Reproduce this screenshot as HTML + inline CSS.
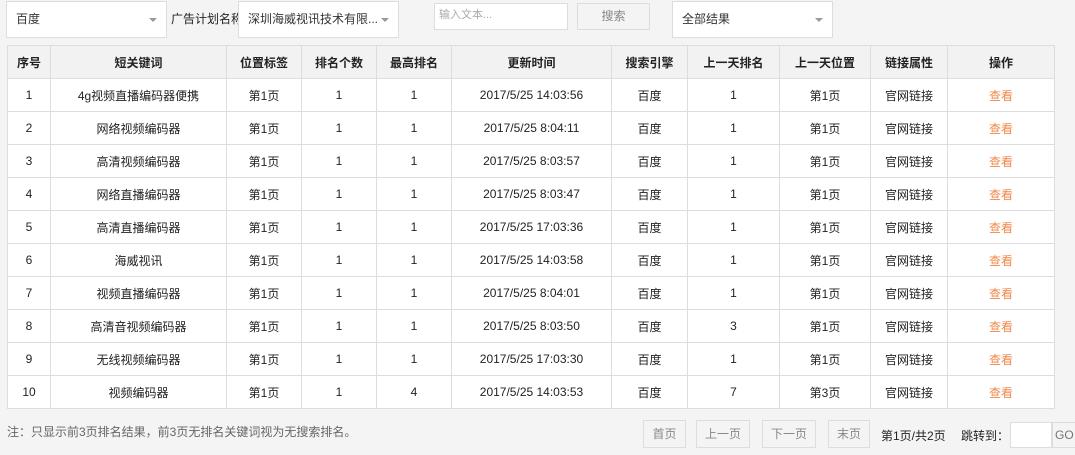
<!DOCTYPE html>
<html><head><meta charset="utf-8"><style>
*{box-sizing:border-box;margin:0;padding:0}
body{width:1075px;height:455px;background:#f4f4f4;font-family:"Liberation Sans","Noto Sans CJK SC",sans-serif;font-size:12px;color:#222;position:relative;overflow:hidden}
.a{position:absolute}
.sel{background:#fff;border:1px solid #ddd;height:37px;top:1px;line-height:35px;padding-left:9px;color:#333}
.sel:after{content:"";position:absolute;right:9px;top:16px;border-left:4px solid transparent;border-right:4px solid transparent;border-top:4px solid #999}
table{position:absolute;left:7px;top:45px;width:1048px;border-collapse:collapse;background:#fff}
td,th{border:1px solid #ddd;text-align:center;height:33px;font-size:12px}
th{background:#f2f2f2;font-weight:bold;color:#222}
td.v{color:#f0884a}
.btn{border:1px solid #ddd;background:#f4f4f4;color:#888;text-align:center;height:28px;line-height:26px;top:420px}
</style></head><body>
<div class="a sel" style="left:6px;width:161px">百度</div>
<div class="a" style="left:171px;top:10px;width:67px;overflow:hidden;white-space:nowrap">广告计划名称</div>
<div class="a sel" style="left:238px;width:161px">深圳海威视讯技术有限...</div>
<div class="a" style="left:434px;top:3px;width:134px;height:27px;border:1px solid #ddd;background:#fff;color:#aaa;line-height:23px;padding-left:4px;font-size:11px">输入文本...</div>
<div class="a" style="left:577px;top:3px;width:73px;height:27px;border:1px solid #ddd;color:#888;text-align:center;line-height:25px">搜索</div>
<div class="a sel" style="left:672px;width:161px">全部结果</div>
<table>
<colgroup><col style="width:43px"><col style="width:176px"><col style="width:75px"><col style="width:75px"><col style="width:75px"><col style="width:160px"><col style="width:76px"><col style="width:92px"><col style="width:91px"><col style="width:77px"><col></colgroup>
<tr><th>序号</th><th>短关键词</th><th>位置标签</th><th>排名个数</th><th>最高排名</th><th>更新时间</th><th>搜索引擎</th><th>上一天排名</th><th>上一天位置</th><th>链接属性</th><th>操作</th></tr>
<tr><td>1</td><td>4g视频直播编码器便携</td><td>第1页</td><td>1</td><td>1</td><td>2017/5/25 14:03:56</td><td>百度</td><td>1</td><td>第1页</td><td>官网链接</td><td class="v">查看</td></tr>
<tr><td>2</td><td>网络视频编码器</td><td>第1页</td><td>1</td><td>1</td><td>2017/5/25 8:04:11</td><td>百度</td><td>1</td><td>第1页</td><td>官网链接</td><td class="v">查看</td></tr>
<tr><td>3</td><td>高清视频编码器</td><td>第1页</td><td>1</td><td>1</td><td>2017/5/25 8:03:57</td><td>百度</td><td>1</td><td>第1页</td><td>官网链接</td><td class="v">查看</td></tr>
<tr><td>4</td><td>网络直播编码器</td><td>第1页</td><td>1</td><td>1</td><td>2017/5/25 8:03:47</td><td>百度</td><td>1</td><td>第1页</td><td>官网链接</td><td class="v">查看</td></tr>
<tr><td>5</td><td>高清直播编码器</td><td>第1页</td><td>1</td><td>1</td><td>2017/5/25 17:03:36</td><td>百度</td><td>1</td><td>第1页</td><td>官网链接</td><td class="v">查看</td></tr>
<tr><td>6</td><td>海威视讯</td><td>第1页</td><td>1</td><td>1</td><td>2017/5/25 14:03:58</td><td>百度</td><td>1</td><td>第1页</td><td>官网链接</td><td class="v">查看</td></tr>
<tr><td>7</td><td>视频直播编码器</td><td>第1页</td><td>1</td><td>1</td><td>2017/5/25 8:04:01</td><td>百度</td><td>1</td><td>第1页</td><td>官网链接</td><td class="v">查看</td></tr>
<tr><td>8</td><td>高清音视频编码器</td><td>第1页</td><td>1</td><td>1</td><td>2017/5/25 8:03:50</td><td>百度</td><td>3</td><td>第1页</td><td>官网链接</td><td class="v">查看</td></tr>
<tr><td>9</td><td>无线视频编码器</td><td>第1页</td><td>1</td><td>1</td><td>2017/5/25 17:03:30</td><td>百度</td><td>1</td><td>第1页</td><td>官网链接</td><td class="v">查看</td></tr>
<tr><td>10</td><td>视频编码器</td><td>第1页</td><td>1</td><td>4</td><td>2017/5/25 14:03:53</td><td>百度</td><td>7</td><td>第3页</td><td>官网链接</td><td class="v">查看</td></tr>
</table>
<div class="a" style="left:7px;top:423px;color:#666">注：只显示前3页排名结果，前3页无排名关键词视为无搜索排名。</div>
<div class="a btn" style="left:643px;width:43px">首页</div>
<div class="a btn" style="left:696px;width:54px">上一页</div>
<div class="a btn" style="left:762px;width:54px">下一页</div>
<div class="a btn" style="left:828px;width:42px">末页</div>
<div class="a" style="left:881px;top:427px">第1页/共2页</div>
<div class="a" style="left:961px;top:427px">跳转到：</div>
<div class="a" style="left:1010px;top:422px;width:42px;height:26px;background:#fff;border:1px solid #ddd"></div>
<div class="a" style="left:1052px;top:422px;width:30px;height:26px;border:1px solid #ddd;color:#777;line-height:24px;padding-left:2px">GO</div>
</body></html>
